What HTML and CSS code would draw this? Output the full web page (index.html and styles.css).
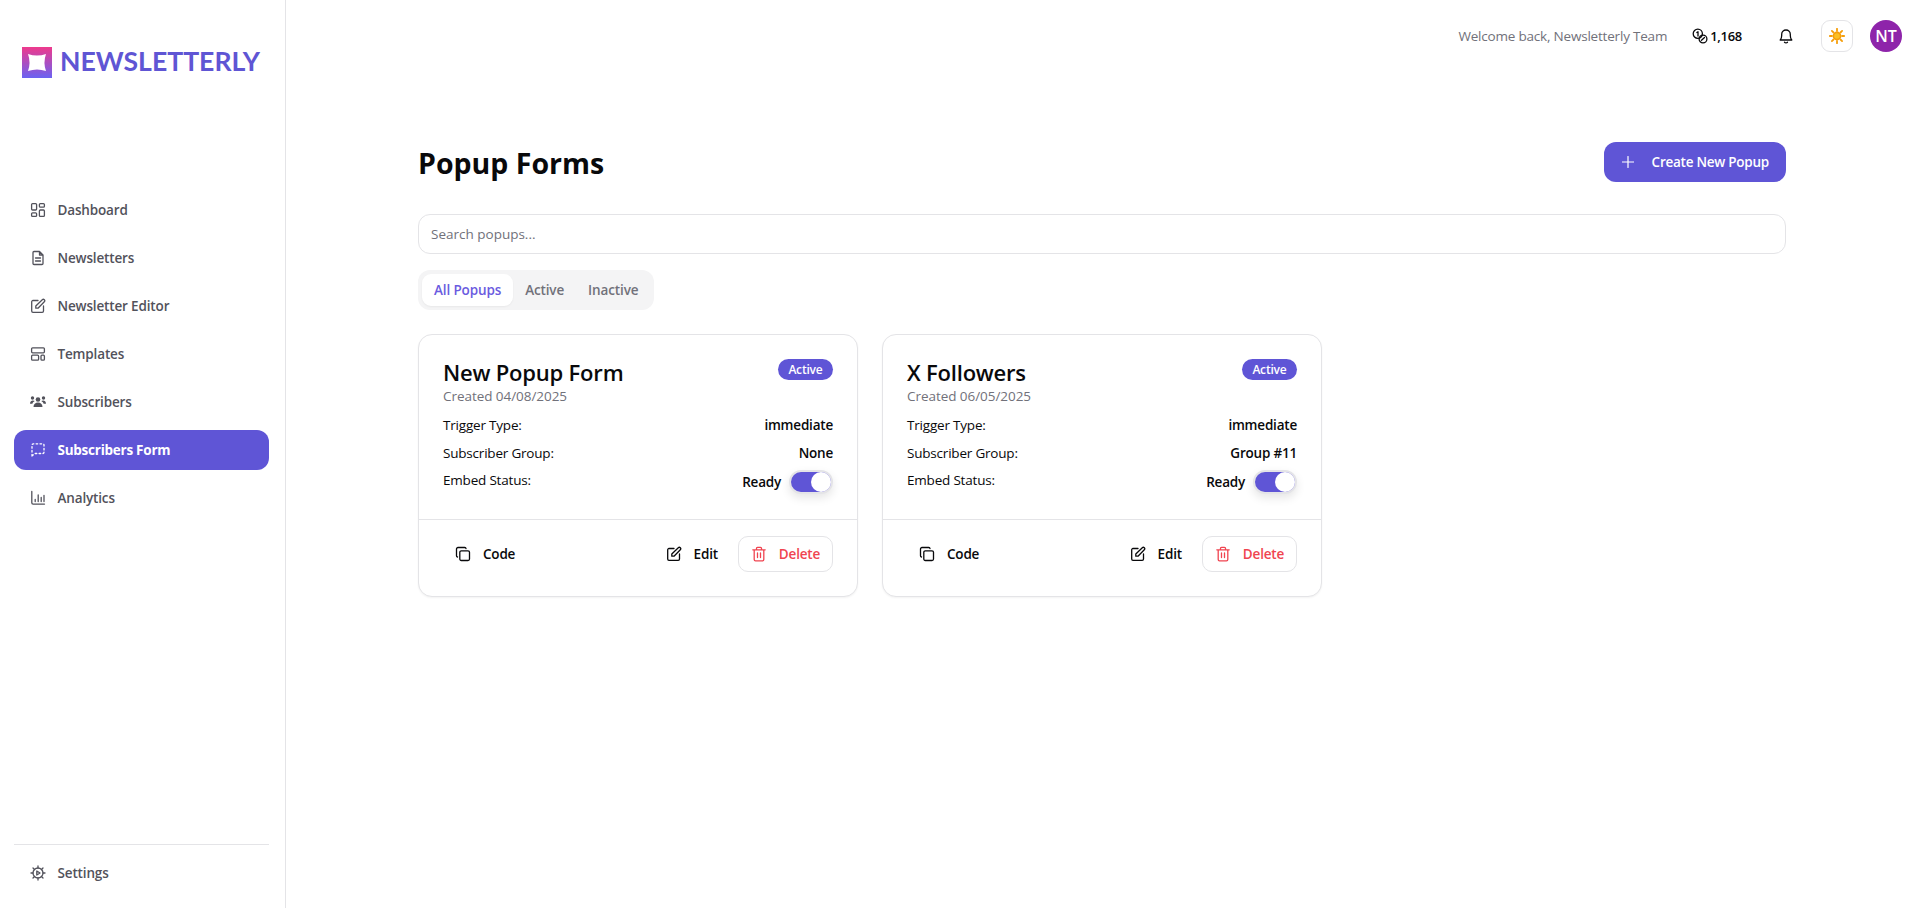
FILE: index.html
```html
<!DOCTYPE html>
<html lang="en">
<head>
<meta charset="utf-8">
<title>Popup Forms</title>
<link rel="stylesheet" href="styles.css">
</head>
<body>
<div class="app">
  <aside class="sidebar">
    <div class="logo">
      <svg class="logo-mark" viewBox="0 0 30 31"><defs><linearGradient id="lg" x1="0" y1="0" x2="0" y2="1"><stop offset="0" stop-color="#ee3a8c"/><stop offset="1" stop-color="#6b62f2"/></linearGradient></defs><rect width="30" height="31" fill="url(#lg)"/><path d="M6 7Q15 10 24 7Q21 15.500 24 24Q15 21 6 24Q9 15.500 6 7Z" fill="#fff"/></svg>
      <span class="logo-text">NEWSLETTERLY</span>
    </div>
    <nav class="nav">
      <a class="nav-item"><svg class="ico" viewBox="0 0 16 16"><rect x="1.600" y="1.600" width="5" height="6.400" rx="1"/><rect x="9.400" y="1.600" width="5" height="3.600" rx="1"/><rect x="1.600" y="10.800" width="5" height="3.600" rx="1"/><rect x="9.400" y="8" width="5" height="6.400" rx="1"/></svg>Dashboard</a>
      <a class="nav-item"><svg class="ico" viewBox="0 0 16 16"><path d="M3 2.500A1 1 0 0 1 4 1.500H9.500L13 5V13.500A1 1 0 0 1 12 14.500H4A1 1 0 0 1 3 13.500ZM9.500 1.500V5H13M5.500 8H10.500M5.500 11H10.500"/></svg>Newsletters</a>
      <a class="nav-item"><svg class="ico" viewBox="0 0 16 16"><path d="M8 2.500H3A1.300 1.300 0 0 0 1.700 3.800V13A1.300 1.300 0 0 0 3 14.300H12.200A1.300 1.300 0 0 0 13.500 13V8M5.800 10.200V8L12.300 1.700A1 1 0 0 1 14.300 3.700L8 10.200Z"/></svg>Newsletter Editor</a>
      <a class="nav-item"><svg class="ico" viewBox="0 0 16 16"><rect x="1.600" y="1.800" width="12.800" height="5" rx="1"/><rect x="1.600" y="9.200" width="7" height="5" rx="1"/><rect x="11" y="9.200" width="3.400" height="5" rx="1"/></svg>Templates</a>
      <a class="nav-item"><svg class="ico ico-solid" viewBox="0 0 16 16"><circle cx="8" cy="5.500" r="2.300"/><circle cx="2.500" cy="4" r="1.700"/><circle cx="13.500" cy="4" r="1.700"/><path d="M3.500 13C3.500 10 5.500 8.500 8 8.500S12.500 10 12.500 13ZM0 9.800C0 7.400 1.500 6.400 2.800 6.400C3.600 6.400 4.300 6.700 4.700 7.100C3.400 7.900 2.600 8.900 2.400 9.800ZM16 9.800C16 7.400 14.500 6.400 13.200 6.400C12.400 6.400 11.700 6.700 11.300 7.100C12.600 7.900 13.400 8.900 13.600 9.800Z"/></svg>Subscribers</a>
      <a class="nav-item nav-item-active"><svg class="ico" viewBox="0 0 16 16"><path class="dash" d="M2 14V3A1.200 1.200 0 0 1 3.200 1.800H12.800A1.200 1.200 0 0 1 14 3V10.300A1.200 1.200 0 0 1 12.800 11.500H5L2 14Z"/></svg>Subscribers Form</a>
      <a class="nav-item"><svg class="ico" viewBox="0 0 16 16"><path d="M1.800 1.500V12.800A1.300 1.300 0 0 0 3.100 14.100H14.500M5.200 9.500V11.500M8.200 5V11.500M11.200 7.500V11.500M14 5.500V11.500"/></svg>Analytics</a>
    </nav>
    <div class="sidebar-foot">
      <a class="nav-item"><svg class="ico" viewBox="0 0 16 16"><circle cx="8" cy="8" r="5"/><path d="M6.800 6V10L10 8Z"/><path d="M8 1V3M8 13V15M1 8H3M13 8H15M3 3L4.500 4.500M11.500 11.500L13 13M13 3L11.500 4.500M4.500 11.500L3 13"/></svg>Settings</a>
    </div>
  </aside>
  <div class="main">
    <header class="topbar">
      <span class="welcome">Welcome back, Newsletterly Team</span>
      <span class="credits"><svg class="ico-coins" viewBox="0 0 16 16"><circle cx="5.800" cy="5.800" r="4.600"/><path d="M4.800 4.500L6 3.800V8"/><circle cx="11" cy="11" r="3.900"/><path d="M9.500 12.300L12.500 9.500"/></svg>1,168</span>
      <svg class="ico-bell" viewBox="0 0 16 16"><path d="M2.200 12H13.800C12.600 10.800 12.300 9.600 12.300 7.500V6.300A4.300 4.300 0 0 0 3.700 6.300V7.500C3.700 9.600 3.400 10.800 2.200 12ZM6.500 14.300C7.200 15 8.800 15 9.500 14.300"/></svg>
      <button class="theme-btn"><svg class="ico-sun" viewBox="0 0 16 16"><circle class="sun-core" cx="8" cy="8" r="3.600"/><path class="sun-rays" d="M8 .8V3M8 13V15.200M.8 8H3M13 8H15.200M2.900 2.900L4.500 4.500M11.500 11.500L13.100 13.100M13.100 2.900L11.500 4.500M4.500 11.500L2.900 13.100"/></svg></button>
      <span class="avatar">NT</span>
    </header>
    <main class="content">
      <div class="page-head">
        <h1 class="page-title">Popup Forms</h1>
        <button class="create-btn"><svg class="ico-plus" viewBox="0 0 12 12"><path d="M6 .5V11.500M.5 6H11.500"/></svg>Create New Popup</button>
      </div>
      <input class="search" type="text" placeholder="Search popups...">
      <div class="tabs">
        <span class="tab tab-active">All Popups</span>
        <span class="tab">Active</span>
        <span class="tab">Inactive</span>
      </div>
      <section class="cards">
        <article class="card">
          <div class="card-body">
            <div class="card-top">
              <div>
                <h2 class="card-title">New Popup Form</h2>
                <div class="card-date">Created 04/08/2025</div>
              </div>
              <span class="badge">Active</span>
            </div>
            <div class="row"><span>Trigger Type:</span><strong>immediate</strong></div>
            <div class="row"><span>Subscriber Group:</span><strong>None</strong></div>
            <div class="row row-top"><span>Embed Status:</span><strong class="ready">Ready<i class="switch"></i></strong></div>
          </div>
          <div class="card-foot">
            <button class="act act-code"><svg class="ico-act" viewBox="0 0 16 16"><rect x="4.800" y="4.800" width="9.700" height="9.700" rx="1.500"/><path d="M11 2.500A1.200 1.200 0 0 0 9.800 1.500H3A1.500 1.500 0 0 0 1.500 3V9.800A1.200 1.200 0 0 0 2.500 11"/></svg>Code</button>
            <button class="act act-edit"><svg class="ico-act" viewBox="0 0 16 16"><path d="M8 2.500H3A1.300 1.300 0 0 0 1.700 3.800V13A1.300 1.300 0 0 0 3 14.300H12.200A1.300 1.300 0 0 0 13.500 13V8M5.800 10.200V8L12.300 1.700A1 1 0 0 1 14.300 3.700L8 10.200Z"/></svg>Edit</button>
            <button class="act act-delete"><svg class="ico-act" viewBox="0 0 16 16"><path d="M1.800 3.800H14.200M3.200 3.800V13.500A1.300 1.300 0 0 0 4.500 14.800H11.500A1.300 1.300 0 0 0 12.800 13.500V3.800M5.500 3.800V2.300A1 1 0 0 1 6.500 1.300H9.500A1 1 0 0 1 10.500 2.300V3.800M6.500 7V11.500M9.500 7V11.500"/></svg>Delete</button>
          </div>
        </article>
        <article class="card">
          <div class="card-body">
            <div class="card-top">
              <div>
                <h2 class="card-title">X Followers</h2>
                <div class="card-date">Created 06/05/2025</div>
              </div>
              <span class="badge">Active</span>
            </div>
            <div class="row"><span>Trigger Type:</span><strong>immediate</strong></div>
            <div class="row"><span>Subscriber Group:</span><strong>Group #11</strong></div>
            <div class="row row-top"><span>Embed Status:</span><strong class="ready">Ready<i class="switch"></i></strong></div>
          </div>
          <div class="card-foot">
            <button class="act act-code"><svg class="ico-act" viewBox="0 0 16 16"><rect x="4.800" y="4.800" width="9.700" height="9.700" rx="1.500"/><path d="M11 2.500A1.200 1.200 0 0 0 9.800 1.500H3A1.500 1.500 0 0 0 1.500 3V9.800A1.200 1.200 0 0 0 2.500 11"/></svg>Code</button>
            <button class="act act-edit"><svg class="ico-act" viewBox="0 0 16 16"><path d="M8 2.500H3A1.300 1.300 0 0 0 1.700 3.800V13A1.300 1.300 0 0 0 3 14.300H12.200A1.300 1.300 0 0 0 13.500 13V8M5.800 10.200V8L12.300 1.700A1 1 0 0 1 14.300 3.700L8 10.200Z"/></svg>Edit</button>
            <button class="act act-delete"><svg class="ico-act" viewBox="0 0 16 16"><path d="M1.800 3.800H14.200M3.200 3.800V13.500A1.300 1.300 0 0 0 4.500 14.800H11.500A1.300 1.300 0 0 0 12.800 13.500V3.800M5.500 3.800V2.300A1 1 0 0 1 6.500 1.300H9.500A1 1 0 0 1 10.500 2.300V3.800M6.500 7V11.500M9.500 7V11.500"/></svg>Delete</button>
          </div>
        </article>
      </section>
    </main>
  </div>
</div>
</body>
</html>
```
FILE: styles.css
```css
* { box-sizing: border-box; }
html, body { margin: 0; height: 100%; }
body { font-family: "Open Sans", "Noto Sans", sans-serif; font-size: 13.5px; letter-spacing: -.2px; color: #09090b; background: #fff; }
svg { display: block; flex: none; fill: none; stroke: currentColor; stroke-linecap: round; stroke-linejoin: round; }
button { font: inherit; letter-spacing: inherit; border: 0; background: none; color: inherit; padding: 0; }

.app { display: flex; height: 908px; overflow: hidden; }

.sidebar { width: 286px; flex: none; display: flex; flex-direction: column; border-right: 1px solid #e4e4e7; padding: 47px 16px 0 14px; }
.logo { display: flex; align-items: center; gap: 8px; padding-left: 8px; height: 31px; }
.logo-mark { width: 30px; height: 31px; stroke: none; }
.logo-text { font-family: "Lato", sans-serif; font-size: 26.600px; font-weight: 700; color: #5f55d4; letter-spacing: 0; line-height: 31px; padding-bottom: 2px; }
.nav { display: flex; flex-direction: column; gap: 8px; margin-top: 112px; }
.nav-item { display: flex; align-items: center; gap: 12px; height: 40px; padding: 0 16px; border-radius: 12px; color: #52525b; font-weight: 600; letter-spacing: -.15px; }
.nav-item-active { background: #5f55d6; color: #fff; font-weight: 700; letter-spacing: -.25px; }
.ico { width: 16px; height: 16px; stroke-width: 1.300; margin-left: -.5px; }
.ico-solid { fill: currentColor; stroke: none; }
.dash { stroke-dasharray: 1.600 2.300; }
.sidebar-foot { margin-top: auto; border-top: 1px solid #e4e4e7; padding: 8px 0 15px; }

.main { flex: 1; min-width: 0; display: flex; flex-direction: column; }
.topbar { display: flex; align-items: center; height: 72px; padding: 0 11px 0 0; justify-content: flex-end; }
.welcome { color: #71717a; }
.credits { display: flex; align-items: center; gap: 2px; margin-left: 25px; font-weight: 600; font-size: 13px; letter-spacing: -.3px; }
.ico-coins { width: 16px; height: 16px; stroke-width: 1.300; }
.ico-bell { width: 16px; height: 16px; stroke-width: 1.300; margin-left: 36px; }
.theme-btn { width: 32px; height: 32px; border: 1px solid #e4e4e7; border-radius: 9px; display: flex; align-items: center; justify-content: center; margin-left: 27px; color: #f59e0b; }
.ico-sun { width: 16px; height: 16px; stroke-width: 1.600; }
.sun-core { fill: #fbbf24; }
.sun-rays { stroke-width: 1.800; }
.avatar { width: 32px; height: 32px; border-radius: 50%; background: #8e24aa; color: #fff; font-weight: 600; font-size: 16px; letter-spacing: 0; display: flex; align-items: center; justify-content: center; margin-left: 17px; }

.content { padding: 70px 127px 0 132px; display: flex; flex-direction: column; }
.page-head { display: flex; align-items: center; justify-content: space-between; height: 40px; }
.page-title { margin: 0; padding-top: 2px; font-size: 28.500px; font-weight: 700; letter-spacing: 0; color: #09090b; line-height: 40px; }
.create-btn { display: flex; align-items: center; gap: 18px; height: 40px; padding: 0 17px 0 18px; border-radius: 12px; background: #5f55d6; color: #fff; font-weight: 600; letter-spacing: -.25px; }
.ico-plus { width: 12px; height: 12px; stroke-width: 1.200; }

.search { margin-top: 32px; height: 40px; width: 100%; border: 1px solid #e4e4e7; border-radius: 12px; padding: 0 12px; font: inherit; letter-spacing: 0; outline: 0; }
.search::placeholder { color: #71717a; opacity: 1; }

.tabs { display: flex; align-self: flex-start; margin-top: 16px; padding: 4px; height: 40px; border-radius: 12px; background: #f4f4f5; }
.tab { display: flex; align-items: center; padding: 0 12px; border-radius: 9px; color: #71717a; font-weight: 600; letter-spacing: -.13px; }
.tab-active { background: #fff; color: #6a5be0; box-shadow: 0 1px 2px rgba(0,0,0,.05); }

.cards { display: grid; grid-template-columns: repeat(3, 1fr); gap: 24px; margin-top: 24px; }
.card { height: 263px; border: 1px solid #e4e4e7; border-radius: 14px; background: #fff; box-shadow: 0 1px 2px rgba(0,0,0,.05); display: flex; flex-direction: column; }
.card-body { flex: 1; padding: 24px 24px 0; }
.card-top { display: flex; justify-content: space-between; align-items: flex-start; margin-bottom: 5px; }
.card-title { margin: 0; font-size: 22px; font-weight: 600; letter-spacing: -.2px; line-height: 27px; }
.card-date { color: #71717a; line-height: 20px; letter-spacing: -.05px; }
.badge { padding: 0 10.500px; height: 21px; border-radius: 11px; background: #5f55d6; color: #fff; font-size: 12px; font-weight: 600; line-height: 21px; }
.row { display: flex; justify-content: space-between; align-items: flex-start; height: 28px; line-height: 28px; }
.row strong { font-weight: 600; }
.row-top span { line-height: 26px; }
.ready { display: flex; align-items: center; gap: 8px; height: 24px; margin-top: 3px; line-height: 24px; }
.switch { position: relative; display: block; width: 44px; height: 24px; border-radius: 12px; background: #5f55d6; box-shadow: 0 4px 10px rgba(0,0,0,.1); border: 2px solid #e4e4e7; }
.switch::after { content: ""; position: absolute; right: 0; top: 0; width: 20px; height: 20px; border-radius: 50%; background: #fff; }

.card-foot { display: flex; align-items: flex-start; height: 77px; padding: 16px 24px 0; border-top: 1px solid #e4e4e7; gap: 8px; }
.act { display: flex; align-items: center; height: 36px; padding: 0 12px; gap: 12px; border-radius: 10px; font-weight: 600; }
.act-code { margin-right: auto; }
.act-delete { border: 1px solid #e4e4e7; color: #f04450; }
.ico-act { width: 16px; height: 16px; stroke-width: 1.300; }
```
